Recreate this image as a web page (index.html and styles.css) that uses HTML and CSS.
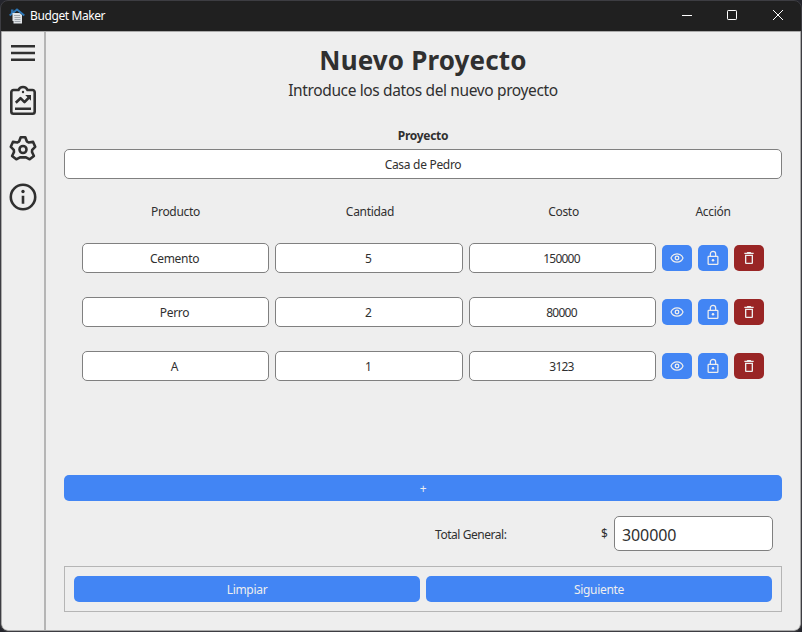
FILE: index.html
```html
<!DOCTYPE html>
<html lang="es">
<head>
<meta charset="utf-8">
<title>Budget Maker</title>
<link rel="stylesheet" href="styles.css">
</head>
<body>
<svg class="defs" width="0" height="0">
  <symbol id="eye" viewBox="0 0 24 24"><path d="M12 5.800C7.800 5.800 4.500 8.200 3 12c1.500 3.800 4.800 6.200 9 6.200s7.500-2.400 9-6.200c-1.500-3.800-4.800-6.200-9-6.200z" fill="none" stroke="currentColor" stroke-width="1.800"/><circle cx="12" cy="12" r="2.700" fill="none" stroke="currentColor" stroke-width="2"/></symbol>
  <symbol id="lock" viewBox="0 0 24 24"><rect x="4.700" y="9.500" width="14.600" height="12" rx="1" fill="none" stroke="currentColor" stroke-width="1.900"/><path d="M8 9V6a4 4 0 0 1 8 0v3" fill="none" stroke="currentColor" stroke-width="1.900"/><circle cx="12" cy="15.500" r="1.900" fill="currentColor"/></symbol>
  <symbol id="trash" viewBox="0 0 24 24"><path d="M6 19c0 1.100.9 2 2 2h8c1.100 0 2-.9 2-2V7H6v12zM8 9h8v10H8V9zm7.500-5l-1-1h-5l-1 1H5v2h14V4z" fill="currentColor"/></symbol>
</svg>
<div class="window">
  <header class="titlebar">
    <svg class="logo" width="16" height="16" viewBox="0 0 16 16"><path d="M2 1.500h2.500v4H2z" fill="#2d6ea8"/><path d="M.7 7.500L8 1.500l7.300 6" fill="none" stroke="#2d78b8" stroke-width="2"/><path d="M3.500 5h7l2.500 2v8.500H4.500V13h-1z" fill="#dfe3e6"/><path d="M5 7.500h6M5.500 9.500h6M5.500 11.500h6M5.500 13.500h6" stroke="#8d969d" stroke-width=".8"/></svg>
    <span class="title">Budget Maker</span>
    <div class="controls">
      <svg width="46" height="30" viewBox="0 0 46 30"><path d="M18 15.500h10"/></svg>
      <svg width="46" height="30" viewBox="0 0 46 30"><rect x="17.500" y="10.500" width="9" height="9" rx=".7"/></svg>
      <svg width="46" height="30" viewBox="0 0 46 30"><path d="M17 10l10 10m0-10l-10 10"/></svg>
    </div>
  </header>
  <div class="body">
    <nav class="sidebar">
      <svg viewBox="0 0 32 32"><path d="M4 9.200h24M4 16h24M4 22.800h24"/></svg>
      <svg viewBox="0 0 32 32"><path d="M11.500 5H6.500a2.200 2.200 0 0 0-2.200 2.200v19.300a2.200 2.200 0 0 0 2.200 2.200h19a2.200 2.200 0 0 0 2.200-2.200V7.200A2.200 2.200 0 0 0 25.500 5h-5c-.7-1.900-2.400-3-4.500-3s-3.800 1.100-4.500 3z"/><path d="M8 23.700h16M8.800 17.800l4.700-4.600 4 4 5-5.200"/><path d="M18.200 10H24v5.800z" class="solid"/><circle cx="16" cy="7" r="1.200" class="solid"/></svg>
      <svg viewBox="0 0 32 32"><path d="M13.700 4.300h4.600l1.500 4 1.800 1.200 4.500-.6 2.100 4.900-3 3-.2 2.200 1.900 4-4.200 3.300-3.700-1.900h-6l-3.700 1.900-4.200-3.300 1.900-4-.2-2.200-3-3 2.100-4.900 4.500.6 1.800-1.200z"/><circle cx="16" cy="16.500" r="3.500"/></svg>
      <svg viewBox="0 0 32 32"><circle cx="16" cy="16" r="12.200"/><path d="M16 14.700v8"/><circle cx="16" cy="10.500" r="1.700" class="solid"/></svg>
    </nav>
    <main class="content">
      <h1>Nuevo Proyecto</h1>
      <p class="subtitle">Introduce los datos del nuevo proyecto</p>
      <div class="label">Proyecto</div>
      <div class="field project">Casa de Pedro</div>
      <section class="items">
        <div class="row head"><span>Producto</span><span>Cantidad</span><span>Costo</span><span>Acción</span></div>
        <div class="row">
          <div class="field">Cemento</div><div class="field num">5</div><div class="field num">150000</div>
          <div class="actions"><button><svg><use href="#eye"/></svg></button><button><svg><use href="#lock"/></svg></button><button class="danger"><svg><use href="#trash"/></svg></button></div>
        </div>
        <div class="row">
          <div class="field">Perro</div><div class="field num">2</div><div class="field num">80000</div>
          <div class="actions"><button><svg><use href="#eye"/></svg></button><button><svg><use href="#lock"/></svg></button><button class="danger"><svg><use href="#trash"/></svg></button></div>
        </div>
        <div class="row">
          <div class="field">A</div><div class="field num">1</div><div class="field num">3123</div>
          <div class="actions"><button><svg><use href="#eye"/></svg></button><button><svg><use href="#lock"/></svg></button><button class="danger"><svg><use href="#trash"/></svg></button></div>
        </div>
      </section>
      <button class="add">+</button>
      <div class="total"><span class="total-label">Total General:</span><span class="currency">$</span><div class="field amount">300000</div></div>
      <footer class="footer"><button>Limpiar</button><button>Siguiente</button></footer>
    </main>
  </div>
</div>
</body>
</html>
```
FILE: styles.css
```css
* { box-sizing: border-box; }
body {
  margin: 0;
  background: #24252c;
  color: #303030;
  font: 12px/16px "Noto Sans", "Open Sans", sans-serif;
  letter-spacing: -0.3px;
}
.defs { display: block; }
.window {
  width: 802px;
  height: 632px;
  display: flex;
  flex-direction: column;
  border: 1px solid #3d3d42;
  border-radius: 8px;
  background: #202020;
  overflow: hidden;
}
.titlebar {
  height: 30px;
  flex: none;
  display: flex;
  align-items: center;
  padding-left: 8px;
  color: #fff;
}
.title { margin-left: 5px; letter-spacing: -0.4px; }
.controls { display: flex; margin: -2px -1px 0 auto; }
.controls svg { fill: none; stroke: #fff; stroke-width: 1; }
.body {
  flex: 1;
  display: flex;
  background: #eee;
  border: 1px solid #aaa;
  border-radius: 0 0 7px 7px;
}
.sidebar {
  width: 44px;
  flex: none;
  display: flex;
  flex-direction: column;
  align-items: center;
  gap: 16px;
  padding-top: 5px;
  border-right: 2px solid #b5b5b5;
}
.sidebar svg {
  width: 32px;
  height: 32px;
  fill: none;
  stroke: #303030;
  stroke-width: 2.6;
  stroke-linejoin: round;
}
.sidebar .solid { fill: #303030; stroke: none; }
.content {
  flex: 1;
  display: flex;
  flex-direction: column;
  padding: 11px 18px 18px;
}
h1 {
  margin: 0;
  font-size: 26px;
  line-height: 34px;
  letter-spacing: 0.15px;
  text-align: center;
}
.subtitle {
  margin: 1px 0 0;
  font-size: 15.5px;
  line-height: 24px;
  letter-spacing: -0.37px;
  text-align: center;
}
.label { margin-top: 26px; font-weight: 700; text-align: center; }
.field {
  height: 30px;
  display: flex;
  align-items: center;
  justify-content: center;
  padding-top: 2px;
  border: 1px solid #808080;
  border-radius: 5px;
  background: #fff;
}
.row .field { padding-right: 2px; }
.row .num { letter-spacing: -0.75px; }
.project { margin-top: 5px; }
.items {
  height: 296px;
  display: flex;
  flex-direction: column;
  gap: 24px;
  padding: 25px 18px 0;
}
.row {
  display: grid;
  grid-template-columns: 187px 188px 187px 102px;
  column-gap: 6px;
  align-items: center;
}
.head { height: 15px; text-align: center; }
.head span:nth-child(2), .head span:nth-child(3) { padding-left: 2px; }
.actions { display: flex; gap: 6px; }
button {
  display: flex;
  align-items: center;
  justify-content: center;
  height: 26px;
  padding: 2px 0 0;
  border: 0;
  border-radius: 5px;
  background: #4285f4;
  color: #eee;
  font: inherit;
  letter-spacing: inherit;
}
.actions button { width: 30px; padding: 0; }
.actions svg { width: 16px; height: 16px; }
.actions .danger { background: #992525; }
.add { flex: none; }
.total {
  display: flex;
  align-items: center;
  margin: 15px 9px 15px 371px;
}
.total-label { width: 166px; padding-top: 2px; letter-spacing: -0.45px; }
.currency { width: 13px; }
.amount {
  flex: 1;
  height: 35px;
  justify-content: flex-start;
  padding-left: 7px;
  font-size: 16px;
  letter-spacing: -0.1px;
}
.footer {
  height: 46px;
  display: flex;
  gap: 6px;
  padding: 9px;
  border: 1px solid #b5b5b5;
}
.footer button { flex: 1; }
```
